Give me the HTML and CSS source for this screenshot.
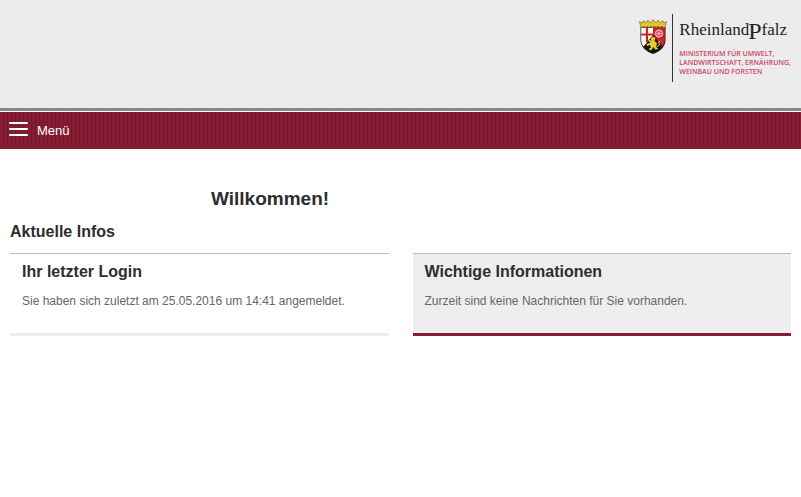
FILE: index.html
```html
<!DOCTYPE html>
<html lang="de">
<head>
    <meta charset="UTF-8">
    <meta name="viewport" content="width=device-width, initial-scale=1.0">
    <title>Willkommen</title>
    <link rel="stylesheet" href="styles.css">
</head>
<body>

    <header class="header">
        <a href="#" class="logo">
            <!-- Wappen -->
            <svg class="wappen" viewBox="0 0 28 36" width="28" height="36" aria-hidden="true">
                <path d="M2 9 L0.5 2.5 L3 4 L4.5 1.5 L6.5 4 L9 1 L11 4 L14 0.5 L17 4 L19 1 L21.5 4 L23.5 1.5 L25 4 L27.5 2.5 L26 9 Z" fill="#e3c62c" stroke="#6b5a14" stroke-width="0.6"/>
                <path d="M4 7.5 H24" stroke="#806c18" stroke-width="1" stroke-dasharray="2 1.5"/>
                <path d="M1.5 8.5 H26.5 V21 C26.5 28 21 32.5 14 35 C7 32.5 1.5 28 1.5 21 Z" fill="#161412"/>
                <path d="M2.2 9 H14 V16 L4.5 27.5 C3 25.5 2.2 23.5 2.2 21 Z" fill="#fff"/>
                <path d="M14 9 H25.8 V21 C25.8 23.5 25 25.5 23.5 27.5 L14 16 Z" fill="#cf202e"/>
                <path d="M8 9 V23 M2.2 15.5 H14" stroke="#cf202e" stroke-width="2.2"/>
                <circle cx="20" cy="14.5" r="3.6" fill="none" stroke="#f3d5d6" stroke-width="1"/>
                <path d="M20 11 V18 M16.5 14.5 H23.5 M17.5 12 L22.5 17 M22.5 12 L17.5 17" stroke="#f3d5d6" stroke-width="0.7"/>
                <path d="M11.5 19.5 L14 17.5 L16.5 19 L15.5 22 L18 24 L17 28 L19.5 30 L16 30.5 L14.5 28 L12 31.5 L9.5 30 L12 28.5 L11 26 L8 27 L7.5 25 L11.5 23.8 L9 21.5 L10.5 20.8 L12.5 22 Z" fill="#ecca2d"/>
                <path d="M17.5 28 L20.5 26 L19.5 23 L21.5 22" fill="none" stroke="#ecca2d" stroke-width="1"/>
            </svg>
            <span class="logo-text">
                <span class="land">Rheinland<span class="land-p">P</span>falz</span>
                <span class="ministerium">MINISTERIUM FÜR UMWELT,<br>LANDWIRTSCHAFT, ERNÄHRUNG,<br>WEINBAU UND FORSTEN</span>
            </span>
        </a>
    </header>

    <nav class="navbar">
        <button type="button" class="menu-btn">
            <svg class="menu-icon" viewBox="0 0 19 14" width="19" height="14" aria-hidden="true">
                <path d="M1 1 H18 M1 7 H18 M1 13 H18" stroke="#fff" stroke-width="2" stroke-linecap="round"/>
            </svg>
            Menü
        </button>
    </nav>

    <main class="content">
        <h1>Willkommen!</h1>
        <h2>Aktuelle Infos</h2>

        <div class="boxes">
            <section class="box">
                <h3>Ihr letzter Login</h3>
                <p>Sie haben sich zuletzt am 25.05.2016 um 14:41 angemeldet.</p>
            </section>
            <section class="box box-wichtig">
                <h3>Wichtige Informationen</h3>
                <p>Zurzeit sind keine Nachrichten für Sie vorhanden.</p>
            </section>
        </div>
    </main>

</body>
</html>
```
FILE: styles.css
```css
* {
    margin: 0;
    padding: 0;
    box-sizing: border-box;
}

body {
    font-family: "Liberation Sans", Arial, sans-serif;
    font-size: 12px;
    color: #666;
    background-color: #fff;
}

/* Kopfbereich */
.header {
    display: flex;
    justify-content: flex-end;
    height: 111px;
    padding: 14px 10px 0;
    background-color: #ebebeb;
    background-image: radial-gradient(#eee 1px, transparent 2px);
    background-size: 5px 4px;
    border-bottom: 3px solid #8a8a8a;
}

.logo {
    display: flex;
    align-items: flex-start;
    height: 68px;
    text-decoration: none;
}

.wappen {
    margin: 5px 5px 0 0;
}

.logo-text {
    display: flex;
    flex-direction: column;
    height: 68px;
    padding-left: 6px;
    border-left: 1px solid #333;
}

.land {
    height: 35px;
    font-family: "Liberation Serif", "Times New Roman", serif;
    font-size: 17px;
    line-height: 32px;
    color: #222;
    white-space: nowrap;
}

.land-p {
    margin-left: -1px;
    font-size: 24px;
    line-height: 24px;
    vertical-align: -4px;
}

.ministerium {
    font-family: "Open Sans", "Noto Sans", sans-serif;
    font-size: 7px;
    font-weight: 600;
    line-height: 9px;
    color: #cf4468;
    white-space: nowrap;
}

/* Navigation */
.navbar {
    margin-top: 1px;
    height: 37px;
    background: repeating-linear-gradient(to right, #851c31 0, #851c31 3px, #74182b 3px, #74182b 4px);
}

.menu-btn {
    display: flex;
    align-items: center;
    gap: 9px;
    height: 36px;
    padding: 0 9px;
    border: none;
    background: none;
    font-family: inherit;
    font-size: 13px;
    color: #fff;
    cursor: pointer;
}

.menu-icon {
    margin-bottom: 3px;
}

/* Inhalt */
.content {
    padding: 38px 10px 0;
}

h1,
h2,
h3 {
    color: #2d2d2d;
}

h1 {
    margin-left: 201px;
    font-size: 19px;
    line-height: 24px;
}

h2 {
    margin: 11px 0;
    font-size: 16px;
    line-height: 20px;
}

.boxes {
    display: grid;
    grid-template-columns: 1fr 1fr;
    gap: 24px;
}

.box {
    padding: 8px 12px 23px;
    border-top: 1px solid #bbb;
    border-bottom: 3px solid #ededed;
}

.box h3 {
    margin-bottom: 10px;
    font-size: 16px;
    line-height: 20px;
}

.box p {
    line-height: 18px;
}

.box-wichtig {
    background-color: #eee;
    border-bottom-color: #851c31;
}
```
